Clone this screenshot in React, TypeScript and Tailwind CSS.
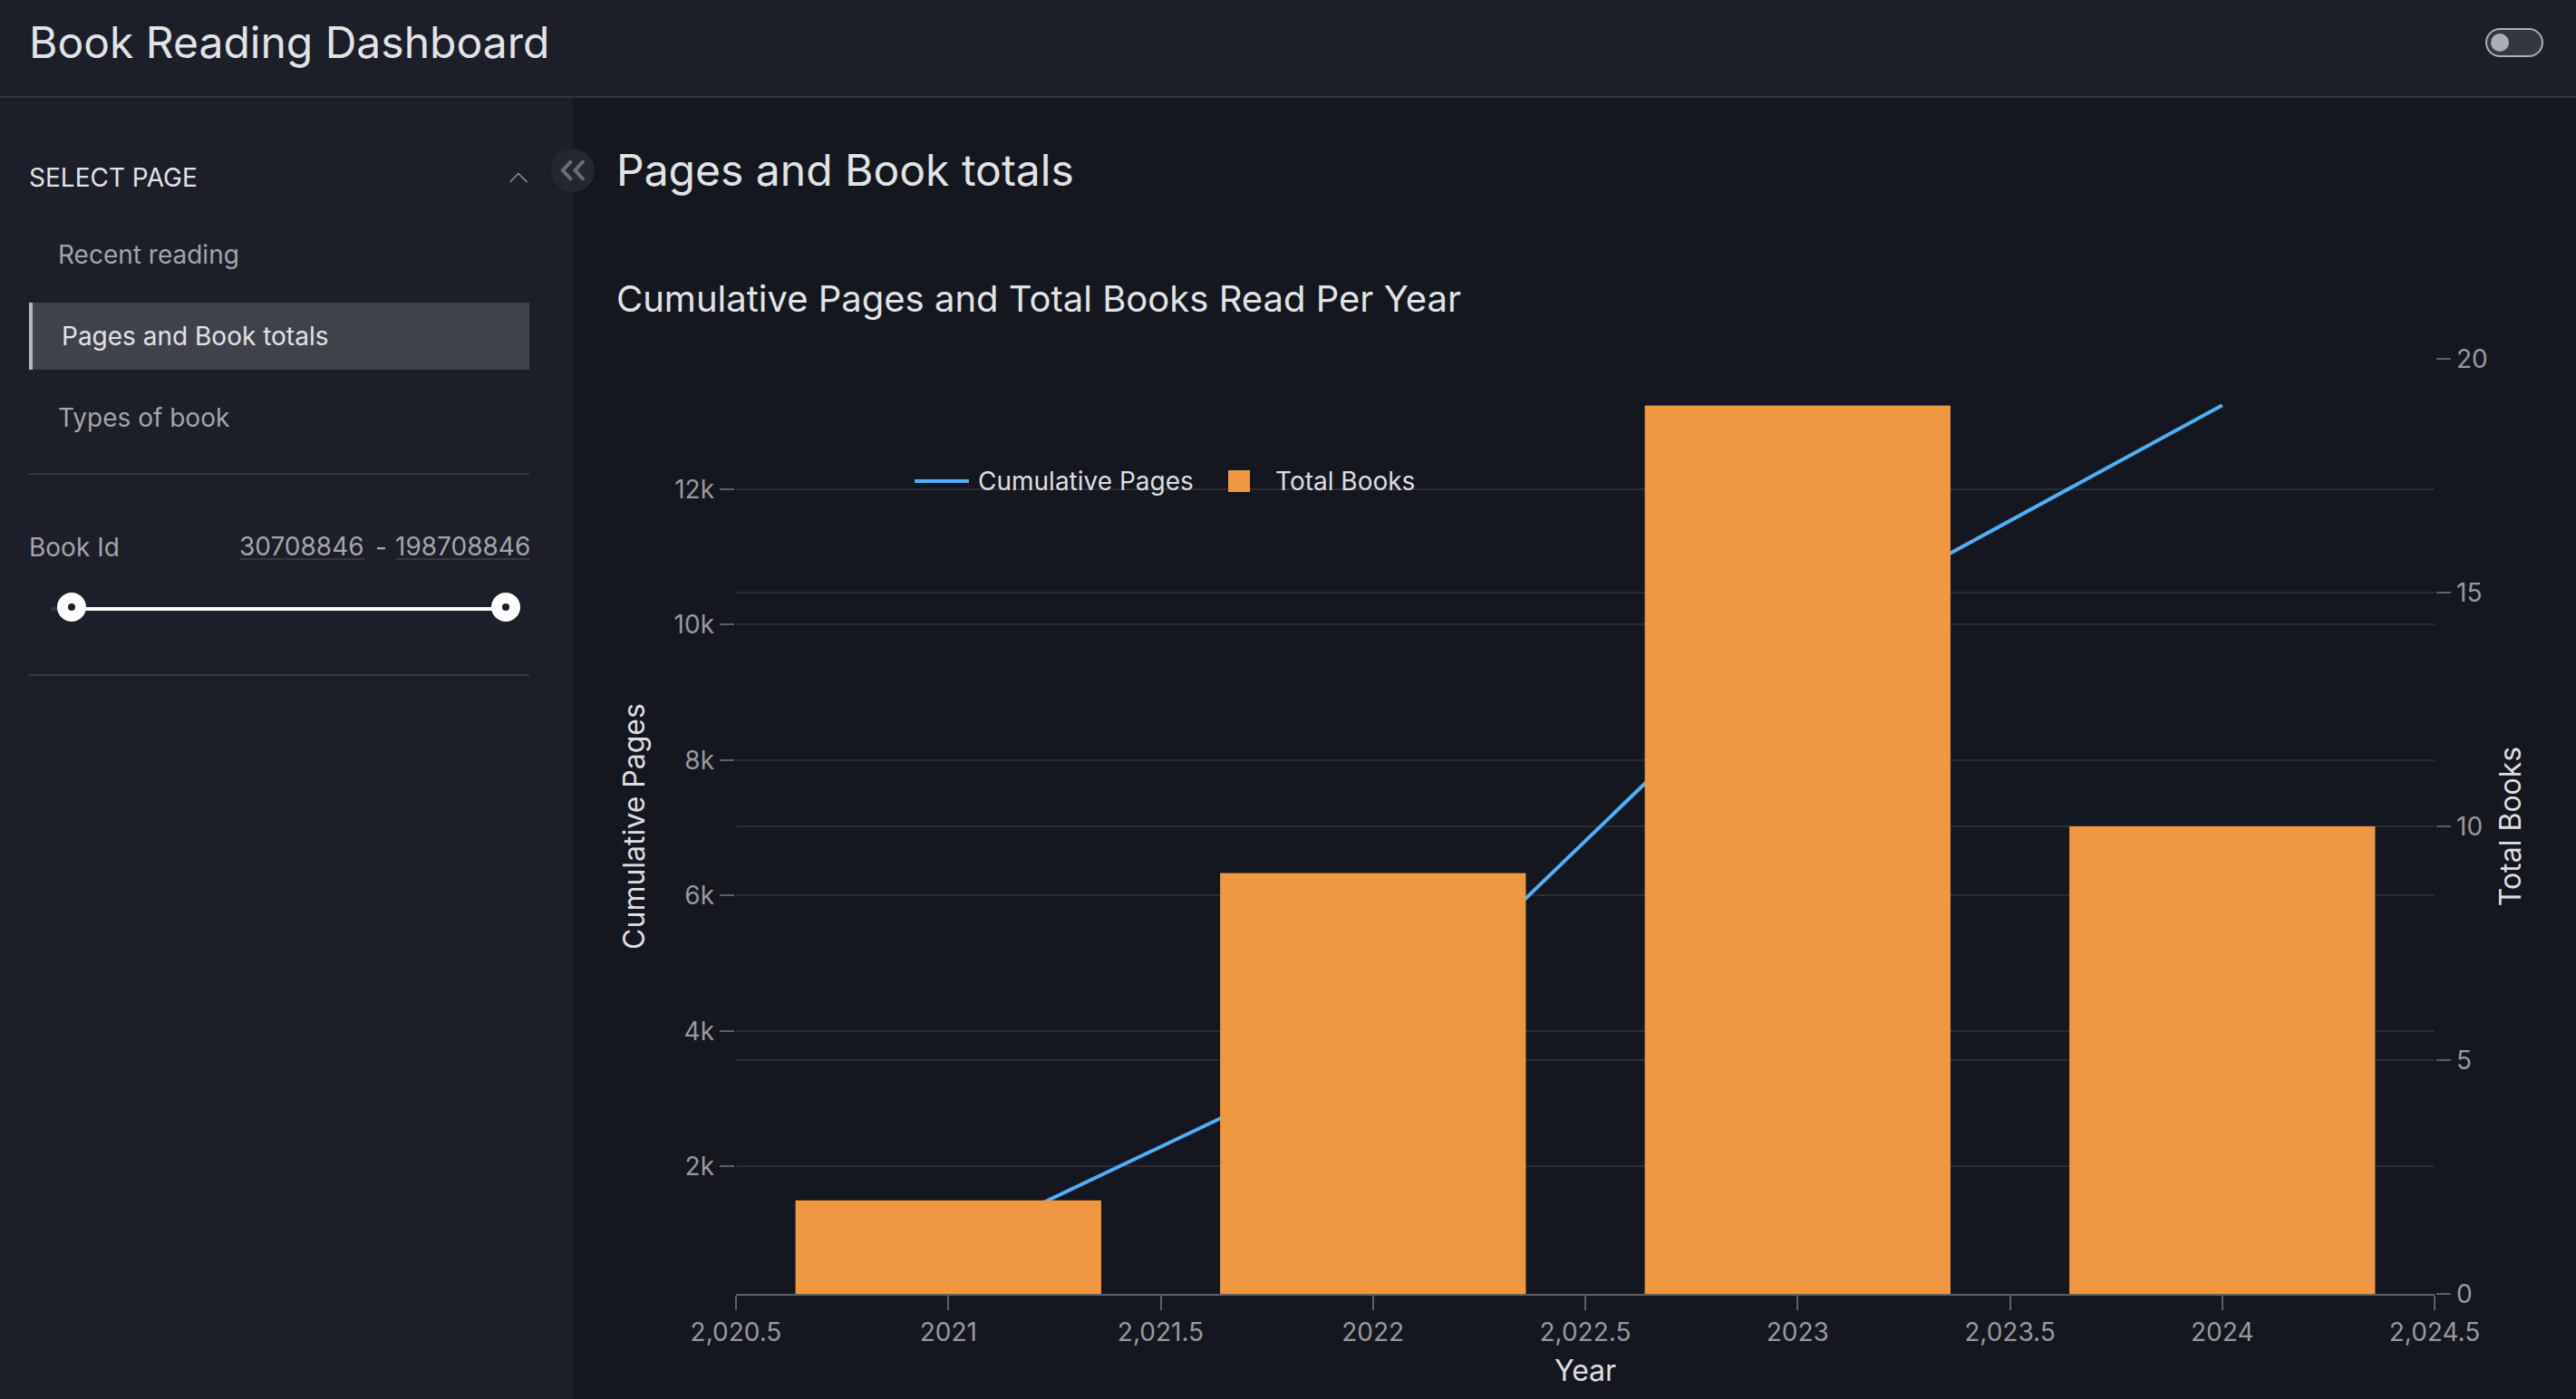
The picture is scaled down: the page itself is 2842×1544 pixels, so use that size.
import { useState } from "react";

const pages = ["Recent reading", "Pages and Book totals", "Types of book"];

const bars = [
  { year: 2021, books: 2 },
  { year: 2022, books: 9 },
  { year: 2023, books: 19 },
  { year: 2024, books: 10 },
];

const cumulative = [
  { year: 2021, pages: 800 },
  { year: 2022, pages: 3785 },
  { year: 2023, pages: 9830 },
  { year: 2024, pages: 13240 },
];

const plot = { left: 132, right: 2006, top: 26, bottom: 1058 };

const xOf = (year: number) =>
  plot.left + ((year - 2020.5) / 4) * (plot.right - plot.left);
const booksY = (n: number) =>
  plot.bottom - (n / 20) * (plot.bottom - plot.top);
// The left axis starts at 120 pages rather than zero.
const pagesY = (n: number) => plot.bottom - ((n - 120) / 2000) * 149.5;

const xTicks = [2020.5, 2021, 2021.5, 2022, 2022.5, 2023, 2023.5, 2024, 2024.5];
const leftTicks = [2, 4, 6, 8, 10, 12];
const rightTicks = [0, 5, 10, 15, 20];

const tickLabel = (v: number) =>
  Number.isInteger(v) ? String(v) : v.toLocaleString("en-US");

function Chart() {
  return (
    <svg
      viewBox="0 0 2130 1174"
      className="block h-auto w-full"
      role="img"
      aria-label="Cumulative Pages and Total Books Read Per Year"
    >
      <g className="stroke-[#2b2d35]" strokeWidth={2} shapeRendering="crispEdges">
        {leftTicks.map((t) => (
          <line key={t} x1={plot.left} x2={plot.right} y1={pagesY(t * 1000)} y2={pagesY(t * 1000)} />
        ))}
        {[5, 10, 15].map((t) => (
          <line key={t} x1={plot.left} x2={plot.right} y1={booksY(t)} y2={booksY(t)} />
        ))}
      </g>

      <polyline
        points={cumulative.map((p) => `${xOf(p.year)},${pagesY(p.pages)}`).join(" ")}
        className="fill-none stroke-[#4fb0f9]"
        strokeWidth={4}
      />

      <g className="fill-[#ef9841]">
        {bars.map((b) => {
          const x = xOf(b.year - 0.36);
          return (
            <rect
              key={b.year}
              x={x}
              y={booksY(b.books)}
              width={xOf(b.year + 0.36) - x}
              height={plot.bottom - booksY(b.books)}
            />
          );
        })}
      </g>

      <g className="stroke-[#5e6066]" strokeWidth={2} shapeRendering="crispEdges">
        <line x1={plot.left} x2={plot.right} y1={plot.bottom + 1} y2={plot.bottom + 1} />
        {xTicks.map((t) => (
          <line key={t} x1={xOf(t)} x2={xOf(t)} y1={plot.bottom + 2} y2={plot.bottom + 18} />
        ))}
        {leftTicks.map((t) => (
          <line key={t} x1={114} x2={130} y1={pagesY(t * 1000)} y2={pagesY(t * 1000)} />
        ))}
        {rightTicks.map((t) => (
          <line key={t} x1={2008} x2={2024} y1={booksY(t)} y2={booksY(t)} />
        ))}
      </g>

      <g className="fill-[#98999d] text-[28px]">
        {xTicks.map((t) => (
          <text key={t} x={xOf(t)} y={1110} textAnchor="middle">
            {tickLabel(t)}
          </text>
        ))}
        {leftTicks.map((t) => (
          <text key={t} x={108} y={pagesY(t * 1000) + 10} textAnchor="end">
            {t}k
          </text>
        ))}
        {rightTicks.map((t) => (
          <text key={t} x={2030} y={booksY(t) + 10}>
            {t}
          </text>
        ))}
      </g>

      <g className="fill-[#dedee0] text-[32px]" textAnchor="middle">
        <text x={1069} y={1154}>
          Year
        </text>
        <text transform="translate(31 542) rotate(-90)">Cumulative Pages</text>
        <text transform="translate(2101 542) rotate(-90)">Total Books</text>
      </g>

      <g className="fill-[#dedee0] text-[28px]">
        <line x1={329} x2={389} y1={161} y2={161} className="stroke-[#4fb0f9]" strokeWidth={4} />
        <text x={399} y={171}>
          Cumulative Pages
        </text>
        <rect x={675} y={149} width={24} height={24} className="fill-[#ef9841]" />
        <text x={727} y={171}>
          Total Books
        </text>
      </g>
    </svg>
  );
}

function RangeFilter() {
  const min = 22645000;
  const max = 198708846;
  const [low, setLow] = useState(30708846);
  const [high, setHigh] = useState(198708846);
  const pct = (v: number) => ((v - min) / (max - min)) * 100;

  return (
    <fieldset className="border-b-2 border-[#343741] pt-16 pb-[58px]">
      <div className="flex items-center text-[28px] leading-8 text-[#a4a5a9]">
        <label htmlFor="low" className="mr-auto">
          Book Id
        </label>
        <input
          id="low"
          className="h-7 w-[138px] min-w-0 border-b-2 border-[#343741] bg-transparent leading-7 text-[#a4a5a9] outline-none"
          value={low}
          onChange={(e) => setLow(Number(e.target.value) || 0)}
        />
        <span className="w-[34px] pl-3">-</span>
        <input
          aria-label="Highest Book Id"
          className="h-7 w-[148px] min-w-0 border-b-2 border-[#343741] bg-transparent leading-7 text-[#a4a5a9] outline-none"
          value={high}
          onChange={(e) => setHigh(Number(e.target.value) || 0)}
        />
      </div>
      <div className="relative mt-[34px] mr-2.5 ml-2 h-8">
        <div className="absolute inset-x-4 top-4 h-1 rounded-full bg-[#343741]">
          <div
            className="absolute h-full bg-white"
            style={{ left: `${pct(low)}%`, right: `${100 - pct(high)}%` }}
          />
        </div>
        {[
          { label: "Book Id from", value: low, set: setLow },
          { label: "Book Id to", value: high, set: setHigh },
        ].map((r) => (
          <input
            key={r.label}
            type="range"
            aria-label={r.label}
            min={min}
            max={max}
            value={r.value}
            onChange={(e) => r.set(Number(e.target.value))}
            className="pointer-events-none absolute inset-0 h-8 w-full appearance-none bg-transparent [&::-webkit-slider-thumb]:pointer-events-auto [&::-webkit-slider-thumb]:size-8 [&::-webkit-slider-thumb]:appearance-none [&::-webkit-slider-thumb]:rounded-full [&::-webkit-slider-thumb]:border-12 [&::-webkit-slider-thumb]:border-white [&::-webkit-slider-thumb]:bg-[#1c1e29]"
          />
        ))}
      </div>
    </fieldset>
  );
}

export default function App() {
  const [current, setCurrent] = useState(1);
  return (
    <div className="flex min-h-screen flex-col overflow-hidden bg-[#14171f] font-['Inter',sans-serif] text-[#e2e3e5]">
      <header className="flex items-center justify-between border-b-2 border-[#343741] bg-[#1c1e29] pr-9 pb-3 pl-8">
        <h1 className="py-[19px] text-5xl leading-14">Book Reading Dashboard</h1>
        <input
          type="checkbox"
          role="switch"
          aria-label="Light theme"
          className="h-8 w-16 appearance-none rounded-full border-2 border-[#adaeb3] bg-[#343741] p-1 before:block before:size-5 before:rounded-full before:bg-[#adaeb3] checked:before:ml-8"
        />
      </header>

      <div className="flex grow">
        <aside className="relative w-[632px] shrink-0 bg-[#1c1e29] pr-12 pl-8">
          <nav className="border-b-2 border-[#343741] pt-[68px] pb-6 text-[28px]">
            <button className="flex w-full items-center justify-between leading-10">
              SELECT PAGE
              <svg viewBox="0 0 24 24" className="size-6 fill-none stroke-[#94959a]" strokeWidth={1.5}>
                <path d="M2.5 17 L12 7.5 L21.5 17" />
              </svg>
            </button>
            <ul className="mt-7 flex flex-col gap-4">
              {pages.map((page, i) => (
                <li key={page}>
                  <a
                    href="#"
                    onClick={() => setCurrent(i)}
                    className={
                      i === current
                        ? "flex h-[74px] items-center border-l-4 border-[#b4b5b9] bg-[#40424b] pl-8"
                        : "flex h-[74px] items-center pl-8 text-[#a4a5a9]"
                    }
                  >
                    {page}
                  </a>
                </li>
              ))}
            </ul>
          </nav>
          <RangeFilter />
          <button
            aria-label="Collapse sidebar"
            className="absolute top-14 -right-6 flex size-12 items-center justify-center rounded-full bg-[#242631]"
          >
            <svg viewBox="0 0 32 32" className="size-8 fill-none stroke-[#6b6d74]" strokeWidth={4}>
              <path d="M14.5 5.5 L5 16 L14.5 26.5 M28 5.5 L18.5 16 L28 26.5" />
            </svg>
          </button>
        </aside>

        <main className="min-w-0 grow pt-12 pr-8 pl-12">
          <h2 className="text-5xl leading-16">Pages and Book totals</h2>
          <h3 className="mt-[83px] mb-[13px] text-[40px] leading-[54px]">
            Cumulative Pages and Total Books Read Per Year
          </h3>
          <Chart />
        </main>
      </div>
    </div>
  );
}
